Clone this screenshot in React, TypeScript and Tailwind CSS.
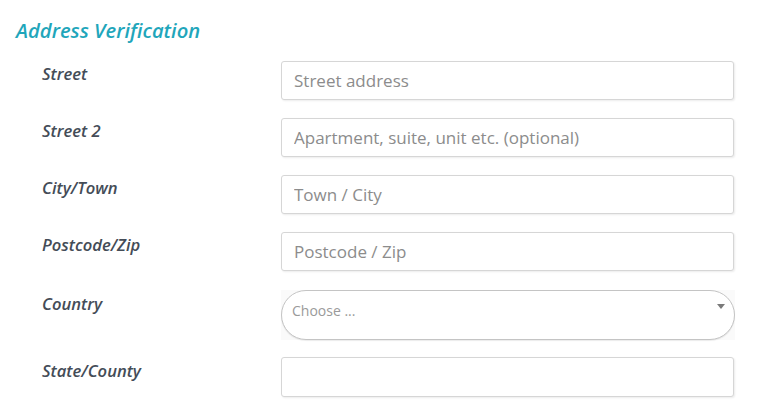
export default function App() {
  const font = { fontFamily: '"Open Sans", "Liberation Sans", sans-serif' };

  const fields = [
    { label: 'Street', placeholder: 'Street address' },
    { label: 'Street 2', placeholder: 'Apartment, suite, unit etc. (optional)' },
    { label: 'City/Town', placeholder: 'Town / City' },
    { label: 'Postcode/Zip', placeholder: 'Postcode / Zip' },
  ];

  return (
    <div className="min-h-[417px] w-[765px] bg-white pl-4 pt-4" style={font}>
      <h2 className="text-[20.2px] leading-[28px] font-semibold italic text-[#1fa6bb]">Address Verification</h2>

      <div className="mt-[17px] flex flex-col">
        {fields.map((f) => (
          <div key={f.label} className="flex items-start mb-[18px]">
            <label className="w-[265px] pl-[26px] pt-[1px] text-[16.6px] leading-6 font-semibold italic text-[#444c57]">
              {f.label}
            </label>
            <input
              className="h-[39px] w-[453px] rounded-[3px] border border-[#d6d6d6] bg-white px-3 text-[17px] text-[#555] shadow-[1px_1px_2px_rgba(0,0,0,0.08)] outline-none placeholder:text-[#8c8c8c]"
              placeholder={f.placeholder}
            />
          </div>
        ))}

        <div className="flex items-start mb-[17px] mt-px">
          <label className="w-[265px] pl-[26px] pt-[2px] text-[16.6px] leading-6 font-semibold italic text-[#444c57]">
            Country
          </label>
          <div className="relative h-[50px] w-[454px] bg-[#fafafa]">
            <div className="h-full w-full rounded-full border border-[#c4c4c4] bg-white pl-[10px] pt-[10px] text-[14px] leading-5 text-[#9a9a9a] shadow-[0_1px_1px_rgba(0,0,0,0.08)]">
              Choose ...
            </div>
            <span className="absolute right-[10px] top-[14px] h-0 w-0 border-x-[4px] border-t-[5px] border-x-transparent border-t-[#7a7a7a]" />
          </div>
        </div>

        <div className="flex items-start">
          <label className="w-[265px] pl-[26px] pt-[2px] text-[16.6px] leading-6 font-semibold italic text-[#444c57]">
            State/County
          </label>
          <input className="h-[40px] w-[453px] rounded-[3px] border border-[#d6d6d6] bg-white px-3 text-[17px] text-[#555] shadow-[1px_1px_2px_rgba(0,0,0,0.08)] outline-none" />
        </div>
      </div>
    </div>
  );
}
